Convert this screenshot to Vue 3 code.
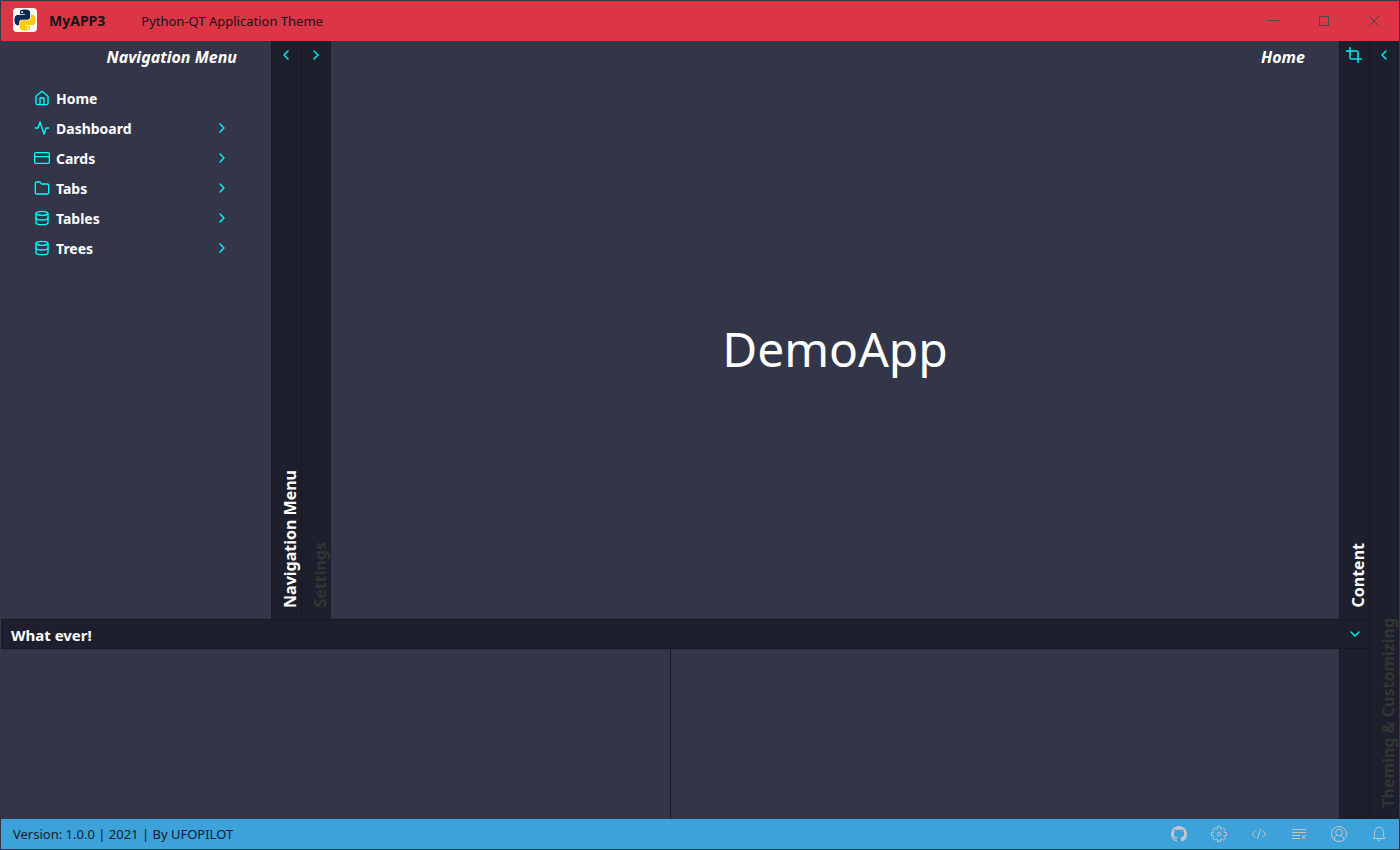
<script setup>
import { ref } from 'vue'

const menu = [
  { label: 'Home', icon: 'home', expandable: false },
  { label: 'Dashboard', icon: 'activity', expandable: true },
  { label: 'Cards', icon: 'card', expandable: true },
  { label: 'Tabs', icon: 'folder', expandable: true },
  { label: 'Tables', icon: 'database', expandable: true },
  { label: 'Trees', icon: 'database', expandable: true },
]

const icons = {
  home: ['M3 9.5 12 2l9 7.500V20a2 2 0 0 1-2 2H5a2 2 0 0 1-2-2z', 'M9 22V12h6v10'],
  activity: ['M22 12h-4l-3 9L9 3l-3 9H2'],
  card: ['M3 4h18a2 2 0 0 1 2 2v12a2 2 0 0 1-2 2H3a2 2 0 0 1-2-2V6a2 2 0 0 1 2-2z', 'M1 10h22'],
  folder: ['M22 19a2 2 0 0 1-2 2H4a2 2 0 0 1-2-2V5a2 2 0 0 1 2-2h5l2 3h9a2 2 0 0 1 2 2z'],
  database: [
    'M3 5a9 3 0 1 0 18 0a9 3 0 1 0-18 0',
    'M21 12c0 1.660-4 3-9 3s-9-1.340-9-3',
    'M3 5v14c0 1.660 4 3 9 3s9-1.340 9-3V5',
  ],
}

const pythonSnake =
  'M14.25.18l.9.2.73.26.59.3.45.32.34.34.25.34.16.33.1.3.04.26.02.2-.01.13V8.5l-.05.63-.13.55-.21.46-.26.38-.3.31-.33.25-.35.19-.35.14-.33.1-.3.07-.26.04-.21.02H8.77l-.69.05-.59.14-.5.22-.41.27-.33.32-.27.35-.2.36-.15.37-.1.35-.07.32-.04.27-.02.21v3.06H3.17l-.21-.03-.28-.07-.32-.12-.35-.18-.36-.26-.36-.36-.35-.46-.32-.59-.28-.73-.21-.88-.14-1.05-.05-1.23.06-1.22.16-1.04.24-.87.32-.71.36-.57.4-.44.42-.33.42-.24.4-.16.36-.1.32-.05.24-.01h.16l.06.01h8.16v-.83H6.18l-.01-2.75-.02-.37.05-.34.11-.31.17-.28.25-.26.31-.23.38-.2.44-.18.51-.15.58-.12.64-.1.71-.06.77-.04.84-.02 1.27.05zm-6.3 1.98l-.23.33-.08.41.08.41.23.34.33.22.41.09.41-.09.33-.22.23-.34.08-.41-.08-.41-.23-.33-.33-.22-.41-.09-.41.09z'

const current = ref('Home')
</script>

<template>
  <div class="window">
    <header class="titlebar">
      <svg class="logo" viewBox="0 0 24 24" aria-hidden="true">
        <rect width="24" height="24" rx="4" fill="#fff" />
        <g transform="translate(1.500 1.500) scale(.875)">
          <path :d="pythonSnake" fill="#0b2a52" />
          <path :d="pythonSnake" fill="#ffc90e" transform="rotate(180 12 12)" />
        </g>
      </svg>
      <strong class="app-name">MyAPP3</strong>
      <span class="app-title">Python-QT Application Theme</span>
      <div class="window-controls">
        <button type="button" aria-label="Minimize">
          <svg viewBox="0 0 12 12"><path d="M.5 5.500h11" /></svg>
        </button>
        <button type="button" aria-label="Maximize">
          <svg viewBox="0 0 12 12"><path d="M1.500 1.500h9v9h-9z" /></svg>
        </button>
        <button type="button" aria-label="Close">
          <svg viewBox="0 0 12 12"><path d="M1 1l10 10M11 1 1 11" /></svg>
        </button>
      </div>
    </header>

    <div class="body">
      <div class="workspace">
        <div class="upper">
          <nav class="sidebar">
            <h2 class="panel-title">Navigation Menu</h2>
            <ul class="menu">
              <li v-for="item in menu" :key="item.label">
                <button type="button" class="menu-item" @click="current = item.label">
                  <svg class="icon" viewBox="0 0 24 24">
                    <path v-for="d in icons[item.icon]" :key="d" :d="d" />
                  </svg>
                  <span class="menu-label">{{ item.label }}</span>
                  <svg v-if="item.expandable" class="icon" viewBox="0 0 24 24"><path d="m9 18 6-6-6-6" /></svg>
                </button>
              </li>
            </ul>
          </nav>
          <div class="rail">
            <button type="button" aria-label="Collapse navigation menu">
              <svg class="icon" viewBox="0 0 24 24"><path d="m15 18-6-6 6-6" /></svg>
            </button>
            <span class="rail-label">Navigation Menu</span>
          </div>
          <div class="rail">
            <button type="button" aria-label="Expand settings">
              <svg class="icon" viewBox="0 0 24 24"><path d="m9 18 6-6-6-6" /></svg>
            </button>
            <span class="rail-label muted">Settings</span>
          </div>
          <main class="content">
            <h2 class="panel-title">{{ current }}</h2>
            <h1 class="hero">DemoApp</h1>
          </main>
          <div class="rail">
            <button type="button" aria-label="Crop content">
              <svg class="icon" viewBox="0 0 24 24">
                <path d="M6.130 1 6 16a2 2 0 0 0 2 2h15" />
                <path d="M1 6.130 16 6a2 2 0 0 1 2 2v15" />
              </svg>
            </button>
            <span class="rail-label">Content</span>
          </div>
        </div>

        <section class="drawer">
          <div class="drawer-bar">
            <h2 class="drawer-title">What ever!</h2>
            <button type="button" aria-label="Collapse panel">
              <svg class="icon" viewBox="0 0 24 24"><path d="m6 9 6 6 6-6" /></svg>
            </button>
          </div>
          <div class="drawer-body">
            <div class="pane"></div>
            <div class="pane"></div>
            <div class="rail"></div>
          </div>
        </section>
      </div>

      <div class="rail">
        <button type="button" aria-label="Expand theming and customizing">
          <svg class="icon" viewBox="0 0 24 24"><path d="m15 18-6-6 6-6" /></svg>
        </button>
        <span class="rail-label muted">Theming &amp; Customizing</span>
      </div>
    </div>

    <footer class="statusbar">
      <span>Version: 1.0.0 | 2021 | By <a href="#">UFOPILOT</a></span>
      <div class="status-actions">
        <button type="button" aria-label="GitHub">
          <svg class="filled" viewBox="0 0 16 16">
            <path d="M8 0C3.580 0 0 3.580 0 8c0 3.540 2.290 6.530 5.470 7.590.4.070.55-.17.55-.38 0-.19-.01-.82-.01-1.490-2.010.37-2.530-.49-2.690-.94-.09-.23-.48-.94-.82-1.130-.28-.15-.68-.52-.01-.53.63-.01 1.080.58 1.230.82.72 1.210 1.870.87 2.330.66.07-.52.28-.87.51-1.070-1.780-.2-3.640-.89-3.640-3.950 0-.87.31-1.590.82-2.150-.08-.2-.36-1.020.08-2.120 0 0 .67-.21 2.200.82.64-.18 1.320-.27 2-.27s1.360.09 2 .27c1.530-1.040 2.200-.82 2.200-.82.44 1.100.16 1.920.08 2.120.51.56.82 1.270.82 2.150 0 3.070-1.870 3.750-3.650 3.950.29.25.54.73.54 1.480 0 1.070-.01 1.930-.01 2.200 0 .21.15.46.55.38A8.010 8.010 0 0 0 16 8c0-4.420-3.580-8-8-8z" />
          </svg>
        </button>
        <button type="button" aria-label="Settings">
          <svg viewBox="0 0 16 16">
            <path d="M6.500 .6h3v2l1.500.6 1.500-1.400 2 2-1.400 1.500.6 1.200h1.800v3h-1.800l-.6 1.400 1.400 1.400-2 2-1.500-1.300-1.500.6v1.900h-3v-1.900L5 13l-1.500 1.300-2-2 1.400-1.400-.6-1.400H.5v-3h1.800l.6-1.200L1.500 3.800l2-2L5 3.200l1.500-.6z" />
            <circle cx="8" cy="8" r="1.800" />
          </svg>
        </button>
        <button type="button" aria-label="Source code">
          <svg viewBox="0 0 16 16"><path d="M4.500 4.500 1.200 8l3.300 3.500M11.500 4.500 14.800 8l-3.300 3.500M9.800 3 6.200 13" /></svg>
        </button>
        <button type="button" aria-label="Clear log">
          <svg viewBox="0 0 16 16"><path d="M1 3.500h14M1 6.500h14M1 9.500h8M1 12.500h8M11 9l3.500 4M14.500 9 11 13" /></svg>
        </button>
        <button type="button" aria-label="Account">
          <svg viewBox="0 0 16 16">
            <circle cx="8" cy="8" r="7.500" />
            <circle cx="8" cy="6.500" r="3.300" />
            <path d="M3.300 13.500c.3-2.500 1.500-4 3-4.300M12.700 13.500c-.3-2.500-1.500-4-3-4.300" />
          </svg>
        </button>
        <button type="button" aria-label="Notifications">
          <svg viewBox="0 0 16 16"><path d="M2 12.500c1.200-1 1.500-2 1.500-5.500C3.500 3.500 5.300 1.300 8 1.300s4.500 2.200 4.500 5.700c0 3.500.3 4.500 1.500 5.500zM6.500 12.800c0 2.600 3 2.600 3 0" /></svg>
        </button>
      </div>
    </footer>
  </div>
</template>

<style>
body {
  background: #323648;
}
</style>

<style scoped>
.window {
  box-sizing: border-box;
  min-height: 100vh;
  display: flex;
  flex-direction: column;
  border: 1px solid #3a3446;
  background: #323648;
  color: #fff;
  font-family: "Noto Sans", "Open Sans", sans-serif;
  font-size: 14px;
  line-height: 20px;
}

h1,
h2,
ul {
  margin: 0;
  padding: 0;
}

button {
  padding: 0;
  border: 0;
  background: none;
  color: inherit;
  font: inherit;
  cursor: pointer;
}

svg {
  display: block;
  flex: none;
  fill: none;
  stroke: currentColor;
}

.icon {
  width: 16px;
  height: 16px;
  color: #00e5e5;
  stroke-width: 2.4;
  stroke-linecap: round;
  stroke-linejoin: round;
}

.titlebar {
  display: flex;
  align-items: center;
  height: 40px;
  padding-left: 12px;
  background: #dc3545;
  color: #141419;
}

.logo {
  width: 24px;
  height: 24px;
  margin-bottom: 2px;
  stroke: none;
}

.app-name {
  margin-left: 12px;
}

.app-title {
  margin-left: 36px;
  font-size: 13px;
}

.window-controls {
  display: flex;
  margin-left: auto;
  color: #494949;
}

.window-controls button {
  display: grid;
  place-items: center;
  width: 50px;
  height: 38px;
}

.window-controls svg {
  width: 12px;
  height: 12px;
}

.body {
  flex: 1;
  display: flex;
}

.workspace {
  flex: 1;
  display: flex;
  flex-direction: column;
  min-width: 0;
}

.upper {
  flex: 1;
  display: flex;
}

.sidebar {
  width: 270px;
}

.panel-title {
  padding: 6px 34px 0 0;
  font-size: 16px;
  font-style: italic;
  text-align: right;
}

.menu {
  margin-top: 17px;
  padding: 0 41px 0 33px;
  list-style: none;
}

.menu-item {
  display: flex;
  align-items: center;
  width: 100%;
  height: 30px;
  gap: 6px;
  font-weight: 700;
  text-align: left;
}

.menu-item .icon {
  margin-bottom: 2px;
  color: #00ffff;
  stroke-width: 2;
}

.menu-label {
  flex: 1;
}

.rail {
  box-sizing: border-box;
  width: 30px;
  display: flex;
  flex-direction: column;
  justify-content: space-between;
  border-left: 1px solid #161922;
  background: #1d202c;
}

.rail button {
  display: grid;
  place-items: center;
  height: 28px;
  padding-right: 2px;
}

.rail-label {
  align-self: flex-end;
  padding-top: 11px;
  font-size: 16px;
  font-weight: 700;
  line-height: 22px;
  white-space: nowrap;
  writing-mode: vertical-rl;
  transform: rotate(180deg);
}

.muted {
  color: #343434;
}

.content {
  flex: 1;
  display: flex;
  flex-direction: column;
}

.hero {
  margin: auto;
  padding-top: 12px;
  font-size: 48px;
  font-weight: 400;
  line-height: 60px;
}

.drawer-bar {
  box-sizing: border-box;
  display: flex;
  align-items: center;
  justify-content: space-between;
  height: 30px;
  padding: 2px 6px 0 10px;
  border: 1px solid #161922;
  border-width: 1px 0;
  background: #1d202c;
}

.drawer-bar button {
  padding-bottom: 2px;
}

.drawer-title {
  font-size: 15px;
}

.drawer-body {
  display: flex;
  height: 170px;
}

.pane {
  box-sizing: border-box;
  flex: 1;
}

.pane + .pane {
  border-left: 1px solid #161922;
}

.statusbar {
  display: flex;
  align-items: center;
  justify-content: space-between;
  height: 30px;
  padding: 0 12px;
  background: #3da1da;
  color: #14202a;
  font-size: 13px;
}

.statusbar a {
  color: #0b1c3c;
  text-decoration: none;
}

.status-actions {
  display: flex;
  gap: 24px;
  color: #c3c6c9;
}

.status-actions svg {
  width: 16px;
  height: 16px;
}

.status-actions .filled {
  fill: currentColor;
  stroke: none;
}
</style>
